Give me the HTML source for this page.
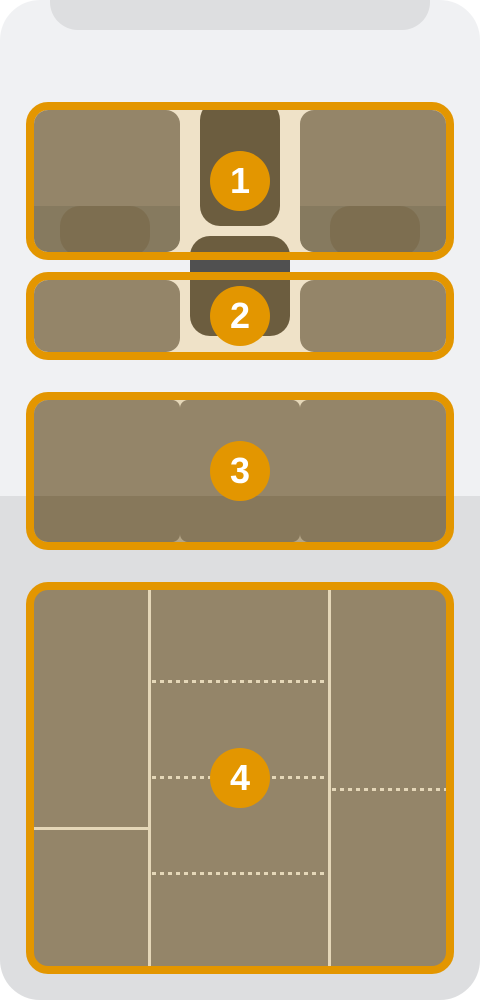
<!DOCTYPE html>
<html><head><style>
*{margin:0;padding:0;box-sizing:border-box}
body{width:480px;height:1000px;background:#fff;position:relative;overflow:hidden;font-family:"Liberation Sans",sans-serif}
.a{position:absolute}
.phone{left:0;top:0;width:480px;height:1000px;border-radius:40px;overflow:hidden;background:linear-gradient(#f0f1f3 0,#f0f1f3 496px,#dddee0 496px)}
.notch{left:50px;top:0;width:380px;height:30px;background:#dddee0;border-radius:0 0 28px 28px}
.box{border:8px solid #e39600;border-radius:22px;overflow:hidden;left:26px;width:428px}
.tile{background:#948569}
.badge{width:60px;height:60px;border-radius:50%;background:#e39600;color:#fff;font-size:36px;font-weight:bold;line-height:60px;text-align:center;left:210px}
.dash{height:3px;background:repeating-linear-gradient(90deg,#e5d7b8 0 4px,transparent 4px 8px)}
</style></head><body>
<div class="a phone">
<div class="a notch"></div>
<div class="a" style="left:190px;top:258px;width:100px;height:16px;background:#505050"></div>
<div class="a box" style="top:102px;height:158px;background:#efe2c8">
 <div class="a tile" style="left:0;top:0;width:146px;height:142px;border-radius:14px;overflow:hidden">
  <div class="a" style="left:0;top:96px;width:146px;height:46px;background:#867a5f"></div>
  <div class="a" style="left:26px;top:96px;width:90px;height:50px;background:#7d6e50;border-radius:20px"></div>
 </div>
 <div class="a tile" style="left:266px;top:0;width:146px;height:142px;border-radius:14px;overflow:hidden">
  <div class="a" style="left:0;top:96px;width:146px;height:46px;background:#867a5f"></div>
  <div class="a" style="left:30px;top:96px;width:90px;height:50px;background:#7d6e50;border-radius:20px"></div>
 </div>
 <div class="a" style="left:166px;top:-10px;width:80px;height:126px;background:#6c5d3f;border-radius:20px"></div>
 <div class="a" style="left:156px;top:126px;width:100px;height:40px;background:#6c5d3f;border-radius:20px 20px 0 0"></div>
</div>
<div class="a box" style="top:272px;height:88px;background:#efe2c8">
 <div class="a tile" style="left:0;top:0;width:146px;height:72px;border-radius:14px"></div>
 <div class="a tile" style="left:266px;top:0;width:146px;height:72px;border-radius:14px"></div>
 <div class="a" style="left:156px;top:-10px;width:100px;height:66px;background:#6c5d3f;border-radius:0 0 20px 20px"></div>
</div>
<div class="a box" style="top:392px;height:158px;background:#e5d7b8">
 <div class="a tile" style="left:0;top:0;width:146px;height:142px;border-radius:8px"></div>
 <div class="a tile" style="left:146px;top:0;width:120px;height:142px;border-radius:8px"></div>
 <div class="a tile" style="left:266px;top:0;width:146px;height:142px;border-radius:8px"></div>
 <div class="a" style="left:0;top:96px;width:412px;height:46px;background:rgba(120,105,75,.45)"></div>
</div>
<div class="a box" style="top:582px;height:392px;background:#948569">
 <div class="a" style="left:114px;top:0;width:3px;height:376px;background:#e5d7b8"></div>
 <div class="a" style="left:294px;top:0;width:3px;height:376px;background:#e5d7b8"></div>
 <div class="a" style="left:0;top:237px;width:114px;height:3px;background:#e5d7b8"></div>
 <div class="a dash" style="left:118px;top:90px;width:176px"></div>
 <div class="a dash" style="left:118px;top:186px;width:176px"></div>
 <div class="a dash" style="left:118px;top:282px;width:176px"></div>
 <div class="a dash" style="left:298px;top:198px;width:114px"></div>
</div>
<div class="a badge" style="top:151px">1</div>
<div class="a badge" style="top:286px">2</div>
<div class="a badge" style="top:441px">3</div>
<div class="a badge" style="top:748px">4</div>
</div>
</body></html>
